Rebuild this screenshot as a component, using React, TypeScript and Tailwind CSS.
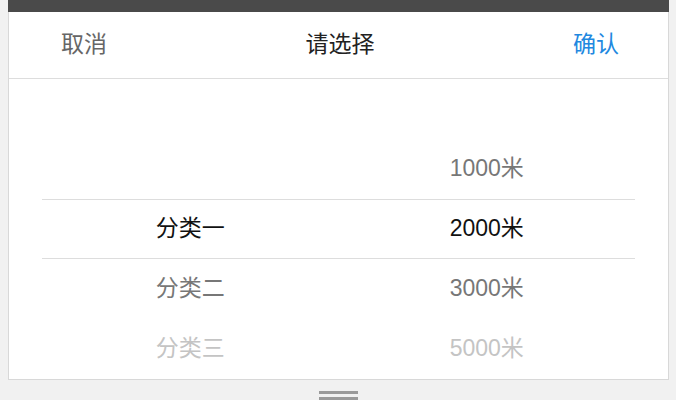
const FONT = "font-['Liberation_Sans','Noto_Sans_CJK_SC',sans-serif]";

type Row = { label: string; tone: 'empty' | 'near' | 'active' | 'far' };

const categories: Row[] = [
  { label: '', tone: 'empty' },
  { label: '', tone: 'empty' },
  { label: '分类一', tone: 'active' },
  { label: '分类二', tone: 'near' },
  { label: '分类三', tone: 'far' },
];

const distances: Row[] = [
  { label: '', tone: 'empty' },
  { label: '1000米', tone: 'near' },
  { label: '2000米', tone: 'active' },
  { label: '3000米', tone: 'near' },
  { label: '5000米', tone: 'far' },
];

const toneClass = {
  empty: '',
  near: 'text-[#777777]',
  active: 'text-[#111111]',
  far: 'text-[#c4c4c4]',
};

function PickerColumn({ rows }: { rows: Row[] }) {
  return (
    <div className="flex flex-col">
      {rows.map((row, i) => (
        <div
          key={i}
          className={`flex h-[60px] items-center justify-center pb-[2px] text-[23px] ${toneClass[row.tone]} ${
            i === 2 ? 'border-y border-[#dddddd]' : ''
          }`}
        >
          {row.label}
        </div>
      ))}
    </div>
  );
}

export default function App() {
  return (
    <div className={`flex h-[400px] w-[676px] flex-col bg-[#f1f1f1] px-[8px] ${FONT}`}>
      <div className="h-[12px] w-[661px] shrink-0 bg-[#4a4a4a]" />
      <div className="flex h-[368px] w-[661px] shrink-0 flex-col border-x border-b border-[#d8d8d8] bg-white">
        <div className="flex h-[67px] shrink-0 items-center justify-between border-b border-[#dddddd] pb-[2px] pl-[52px] pr-[49px] text-[23px]">
          <button className="text-[#666666]">取消</button>
          <span className="text-[#222222]">请选择</span>
          <button className="text-[#2188e0]">确认</button>
        </div>
        <div className="grid grid-cols-2 px-[33px]">
          <PickerColumn rows={categories} />
          <PickerColumn rows={distances} />
        </div>
      </div>
      <div className="flex flex-1 flex-col items-center gap-[3px] pt-[11px]">
        <div className="h-[3px] w-[39px] bg-[#9a9a9a]" />
        <div className="h-[3px] w-[39px] bg-[#9a9a9a]" />
      </div>
    </div>
  );
}
